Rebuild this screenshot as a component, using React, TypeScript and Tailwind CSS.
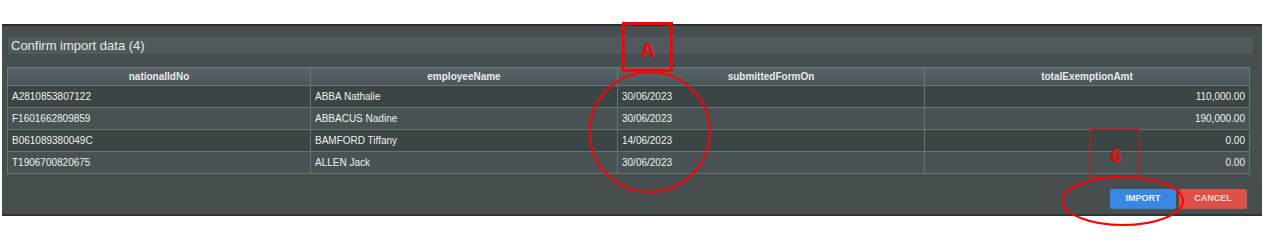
import React from "react";

const rows = [
  { id: "A2810853807122", name: "ABBA Nathalie", date: "30/06/2023", amt: "110,000.00" },
  { id: "F1601662809859", name: "ABBACUS Nadine", date: "30/06/2023", amt: "190,000.00" },
  { id: "B061089380049C", name: "BAMFORD Tiffany", date: "14/06/2023", amt: "0.00" },
  { id: "T1906700820675", name: "ALLEN Jack", date: "30/06/2023", amt: "0.00" },
];

const cols = ["nationalIdNo", "employeeName", "submittedFormOn", "totalExemptionAmt"];

const annoFont = { fontFamily: "'Liberation Sans', Arial, sans-serif" };

export default function App() {
  return (
    <div className="relative h-[226px] w-[1268px] overflow-hidden bg-white pt-[24px] pl-[2px] font-['Liberation_Sans',Arial,sans-serif]">
      <div className="flex h-[192px] w-[1260px] flex-col border-t-[2px] border-b-[2px] border-t-[#2a2e2f] border-b-[#2f3435] bg-[#464e4f]">
        <div className="mt-[11px] ml-[6px] mr-[9px] flex h-[17px] items-center bg-[#505a5d] pl-[3px] text-[13px] text-[#e6e8e8]">
          Confirm import data (4)
        </div>

        <table className="mt-[13px] ml-[5px] w-[1242px] table-fixed border-collapse text-[10px] text-[#eef0f0]">
          <colgroup>
            <col className="w-[303px]" />
            <col className="w-[307px]" />
            <col className="w-[307px]" />
            <col className="w-[325px]" />
          </colgroup>
          <thead>
            <tr className="h-[18px] bg-gradient-to-b from-[#58636a] to-[#4b5558]">
              {cols.map((c) => (
                <th key={c} className="border border-[#6c7678] text-center font-bold text-[#e8eaea]">
                  {c}
                </th>
              ))}
            </tr>
          </thead>
          <tbody>
            {rows.map((r, i) => (
              <tr key={r.id} className={i % 2 === 0 ? "h-[22px] bg-[#3b4546]" : "h-[22px] bg-[#485254]"}>
                <td className="border border-[#68726f] px-[4px]">{r.id}</td>
                <td className="border border-[#68726f] px-[4px]">{r.name}</td>
                <td className="border border-[#68726f] px-[4px]">{r.date}</td>
                <td className="border border-[#68726f] px-[4px] text-right">{r.amt}</td>
              </tr>
            ))}
          </tbody>
        </table>

        <div className="mt-[15px] mr-[15px] flex justify-end gap-[3px]">
          <button className="h-[20px] w-[66px] rounded-[2px] bg-[#3a87e2] text-[9px] font-bold text-[#e8f0fb]">
            IMPORT
          </button>
          <button className="h-[20px] w-[68px] rounded-[2px] bg-[#df4f46] text-[9px] font-bold text-[#f6dcd9]">
            CANCEL
          </button>
        </div>
      </div>

      {/* review annotations */}
      <svg className="pointer-events-none absolute inset-0" width="1268" height="226" viewBox="0 0 1268 226">
        <rect x="623.5" y="23.5" width="48" height="47" fill="none" stroke="#ff0000" strokeWidth="3" />
        <text x="648" y="57" textAnchor="middle" fill="#ff0000" fontSize="21" fontWeight="bold" style={annoFont}>
          A
        </text>
        <ellipse cx="650" cy="132" rx="60" ry="60" fill="none" stroke="#ff0000" strokeWidth="2" />
        <rect x="1090.5" y="129.5" width="49" height="48" fill="none" stroke="#e01010" strokeWidth="1" />
        <text x="1116" y="162" textAnchor="middle" fill="#ff0000" fontSize="19" fontWeight="bold" style={annoFont}>
          6
        </text>
        <ellipse cx="1123" cy="201" rx="60" ry="24" fill="none" stroke="#ff0000" strokeWidth="2" />
      </svg>
    </div>
  );
}
